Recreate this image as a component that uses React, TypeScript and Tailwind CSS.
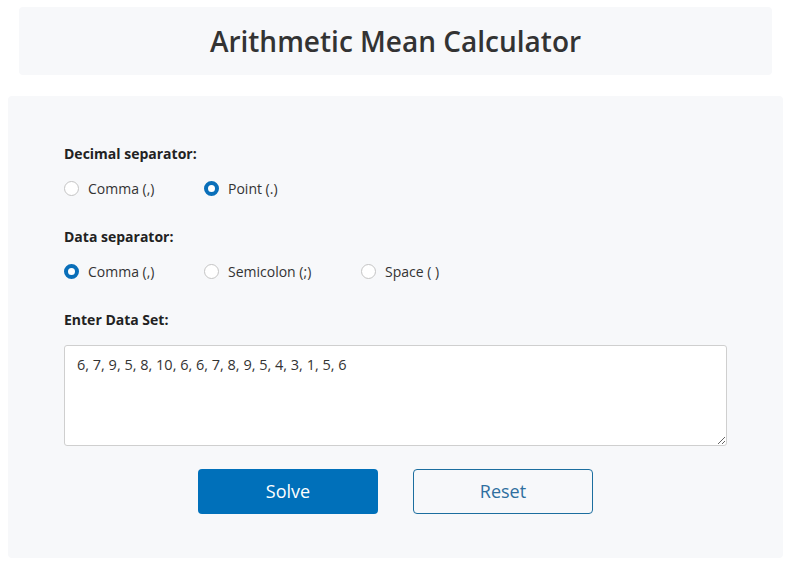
import React from "react";

function Radio({ checked, label }: { checked?: boolean; label: string }) {
  return (
    <label className="flex items-center gap-[9px]">
      {checked ? (
        <span className="w-[15px] h-[15px] rounded-full border-[4px] border-[#0a6fb9] bg-white box-border" />
      ) : (
        <span className="w-[15px] h-[15px] rounded-full border border-[#c4c4c4] bg-white box-border" />
      )}
      <span className="text-[14px] text-[#333]">{label}</span>
    </label>
  );
}

export default function App() {
  return (
    <div
      className="w-[792px] h-[565px] bg-white relative"
      style={{ fontFamily: '"Open Sans", "Noto Sans", sans-serif' }}
    >
      <div className="pt-[7px] px-[19px] pr-[20px]">
        <div className="h-[68px] bg-[#f7f8fa] rounded-[4px] flex items-center justify-center">
          <h1 className="text-[28px] font-semibold text-[#333]">Arithmetic Mean Calculator</h1>
        </div>
      </div>
      <div className="mt-[21px] mx-[8px] mr-[9px] h-[462px] bg-[#f7f8fa] rounded-[4px] px-[56px] pt-[47px]">
        <div className="text-[14px] font-bold text-[#222]">Decimal separator:</div>
        <div className="flex mt-[14px] h-[20px]">
          <div className="w-[140px]"><Radio label="Comma (,)" /></div>
          <Radio checked label="Point (.)" />
        </div>
        <div className="text-[14px] font-bold text-[#222] mt-[28px]">Data separator:</div>
        <div className="flex mt-[14px] h-[20px]">
          <div className="w-[140px]"><Radio checked label="Comma (,)" /></div>
          <div className="w-[157px]"><Radio label="Semicolon (;)" /></div>
          <Radio label="Space ( )" />
        </div>
        <div className="text-[14px] font-bold text-[#222] mt-[28px]">Enter Data Set:</div>
        <textarea
          className="block mt-[15px] w-[663px] h-[101px] bg-white border border-[#cfcfcf] rounded-[3px] px-[12px] py-[8px] text-[14.5px] text-[#333] outline-none"
          defaultValue="6, 7, 9, 5, 8, 10, 6, 6, 7, 8, 9, 5, 4, 3, 1, 5, 6"
        />
        <div className="flex justify-center gap-[35px] mt-[23px] w-[663px]">
          <button className="w-[180px] h-[45px] bg-[#0070ba] rounded-[4px] text-white text-[18px]">Solve</button>
          <button className="w-[180px] h-[45px] border border-[#1c6e9f] rounded-[4px] text-[#2f6f9f] text-[18px] bg-transparent">Reset</button>
        </div>
      </div>
    </div>
  );
}
